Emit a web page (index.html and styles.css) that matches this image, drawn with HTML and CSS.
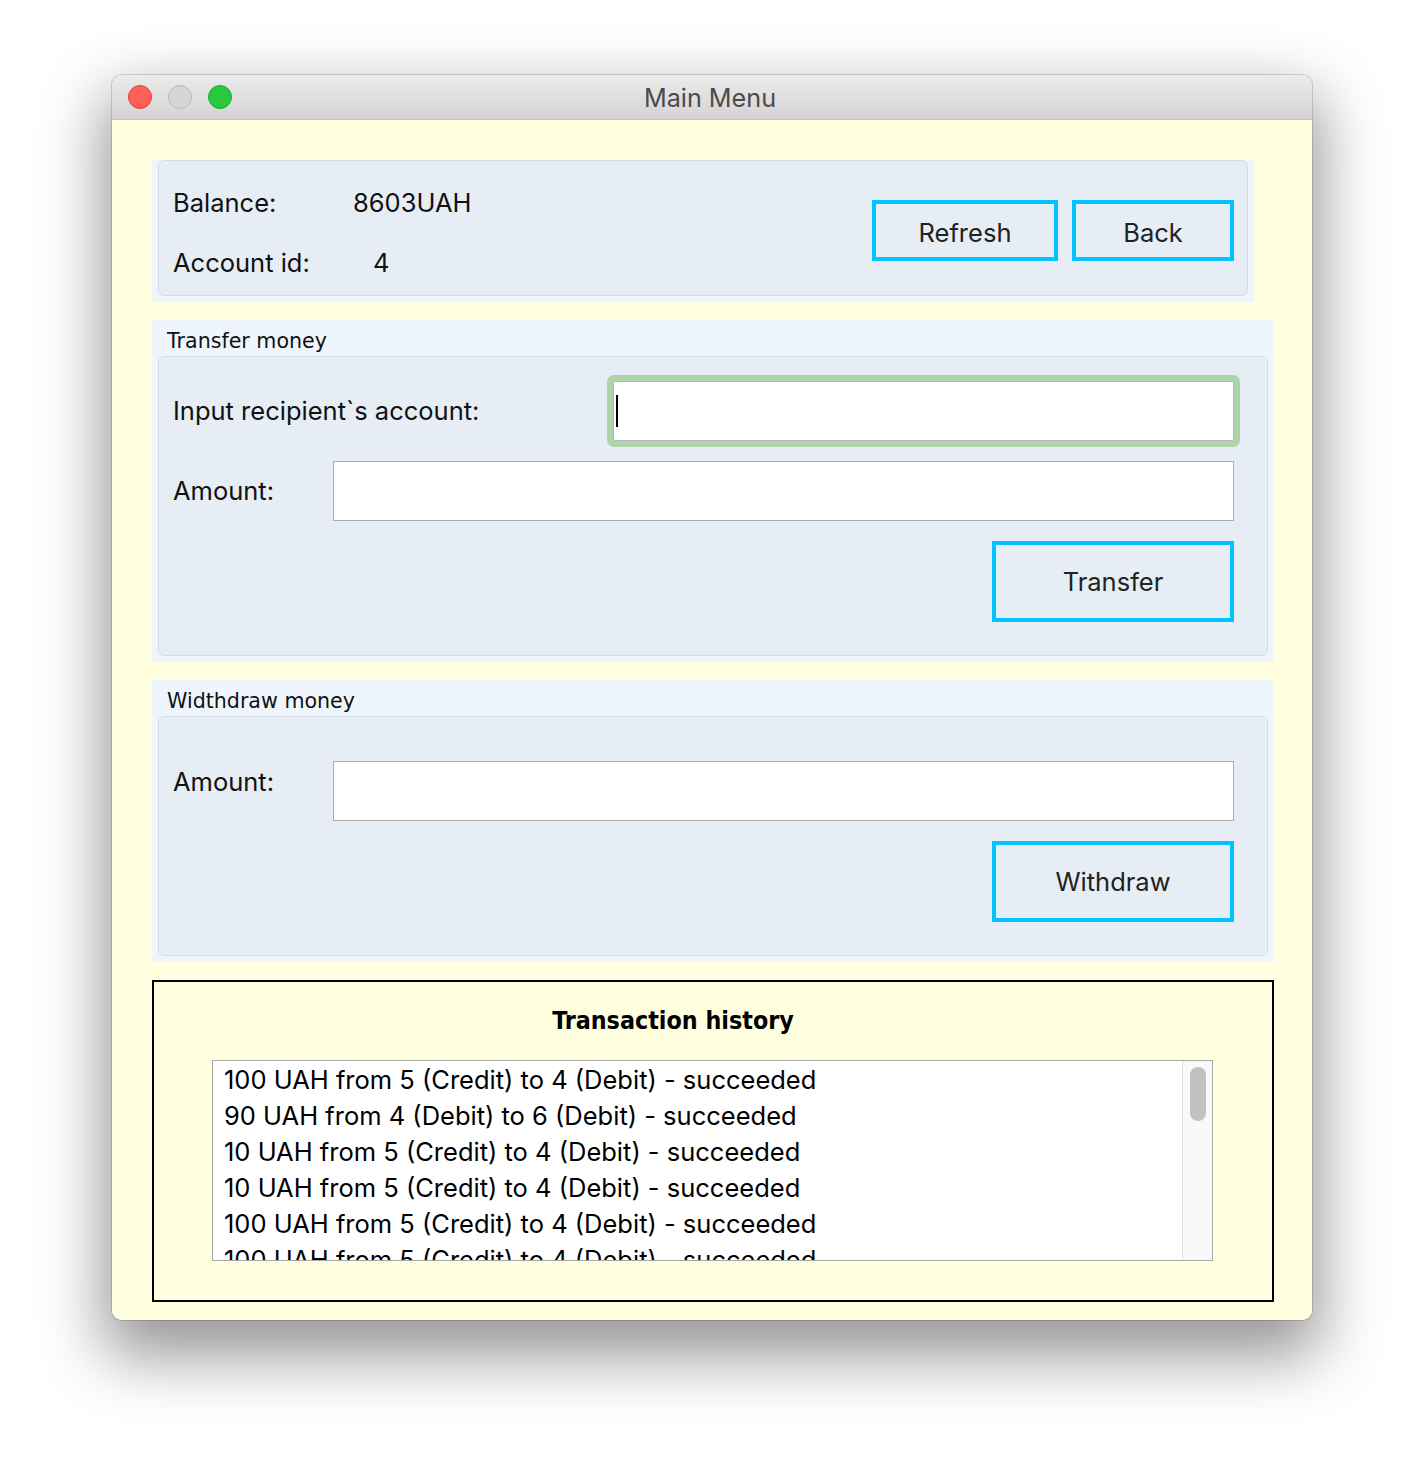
FILE: index.html
```html
<!DOCTYPE html>
<html lang="en">
<head>
<meta charset="utf-8">
<title>Main Menu</title>
<link rel="stylesheet" href="styles.css">
</head>
<body>
<div class="window">
  <div class="titlebar">
    <div class="lights">
      <span class="light light-close"></span>
      <span class="light light-min"></span>
      <span class="light light-max"></span>
    </div>
    <div class="title">Main Menu</div>
    <div class="spacer"></div>
  </div>
  <div class="content">
    <div class="summary-wrap">
      <div class="panel summary">
        <div class="info">
          <div class="info-row"><span class="lbl lbl-balance">Balance:</span><span class="val">8603UAH</span></div>
          <div class="info-row"><span class="lbl lbl-account">Account id:</span><span class="val">4</span></div>
        </div>
        <div class="actions">
          <button class="btn btn-top btn-refresh" type="button">Refresh</button>
          <button class="btn btn-top btn-back" type="button">Back</button>
        </div>
      </div>
    </div>

    <section class="group group-transfer">
      <div class="group-title">Transfer money</div>
      <div class="panel group-body body-transfer">
        <div class="field-row">
          <span class="lbl">Input recipient`s account:</span>
          <div class="field field-recipient field-focus"><span class="caret"></span></div>
        </div>
        <div class="field-row">
          <span class="lbl">Amount:</span>
          <div class="field field-amount"></div>
        </div>
        <div class="btn-row">
          <button class="btn btn-big" type="button">Transfer</button>
        </div>
      </div>
    </section>

    <section class="group group-withdraw">
      <div class="group-title">Widthdraw money</div>
      <div class="panel group-body body-withdraw">
        <div class="field-row field-row-top">
          <span class="lbl lbl-top">Amount:</span>
          <div class="field field-amount"></div>
        </div>
        <div class="btn-row">
          <button class="btn btn-big" type="button">Withdraw</button>
        </div>
      </div>
    </section>

    <section class="history">
      <div class="history-title">Transaction history</div>
      <div class="list">
        <div class="list-items">
          <div class="item">100 UAH from 5 (Credit) to 4 (Debit) - succeeded</div>
          <div class="item">90 UAH from 4 (Debit) to 6 (Debit) - succeeded</div>
          <div class="item">10 UAH from 5 (Credit) to 4 (Debit) - succeeded</div>
          <div class="item">10 UAH from 5 (Credit) to 4 (Debit) - succeeded</div>
          <div class="item">100 UAH from 5 (Credit) to 4 (Debit) - succeeded</div>
          <div class="item">100 UAH from 5 (Credit) to 4 (Debit) - succeeded</div>
        </div>
        <div class="scrollbar"><div class="thumb"></div></div>
      </div>
    </section>
  </div>
</div>
</body>
</html>
```
FILE: styles.css
```css
html, body {
  margin: 0;
  padding: 0;
  background: #ffffff;
}

body {
  height: 1468px;
  box-sizing: border-box;
  padding: 75px 0 0 112px;
  overflow: hidden;
  font-family: Inter, "Noto Sans", "Liberation Sans", sans-serif;
  color: #111111;
}

.window {
  width: 1200px;
  height: 1245px;
  border-radius: 10px;
  overflow: hidden;
  box-shadow: 0 0 0 1px rgba(0, 0, 0, 0.14), 0 28px 64px 8px rgba(0, 0, 0, 0.42);
  display: flex;
  flex-direction: column;
}

/* ---------- title bar ---------- */
.titlebar {
  height: 44px;
  flex: 0 0 44px;
  border-bottom: 1px solid #c2c2c2;
  background: linear-gradient(#ebebeb, #d4d4d4);
  display: grid;
  grid-template-columns: 1fr auto 1fr;
  align-items: center;
}

.lights {
  display: flex;
  gap: 16px;
  padding-left: 16px;
}

.light {
  width: 24px;
  height: 24px;
  border-radius: 50%;
  box-sizing: border-box;
}

.light-close {
  background: #fe5f57;
  border: 1px solid #e2463f;
}

.light-min {
  background: #d6d6d6;
  border: 1px solid #b9b9b9;
}

.light-max {
  background: #28c840;
  border: 1px solid #1cad2c;
}

.title {
  font-size: 25.2px;
  color: #4b4b4b;
  padding-top: 2px;
  transform: translateX(-2px);
}

/* ---------- content ---------- */
.content {
  flex: 1;
  background: #ffffe0;
  padding: 40px 38px 18px 40px;
  display: flex;
  flex-direction: column;
  gap: 18px;
}

.panel {
  background: #e6edf5;
  border: 1px solid #d5dce5;
  border-radius: 6px;
  box-sizing: border-box;
}

.summary-wrap {
  width: 1102px;
  height: 142px;
  box-sizing: border-box;
  padding: 0 6px 6px 6px;
  background: #eef5fd;
}

.summary {
  height: 136px;
  display: flex;
  justify-content: space-between;
}

.info {
  padding: 27px 0 0 14px;
  display: flex;
  flex-direction: column;
  gap: 30px;
}

.info-row {
  display: flex;
  font-size: 25.5px;
  line-height: 30px;
  height: 30px;
}

.lbl {
  font-size: 25.5px;
  line-height: 30px;
  color: #111111;
  white-space: nowrap;
}

.lbl-balance { width: 180px; }
.lbl-account { width: 200px; }

.val { color: #111111; }

.actions {
  padding: 39px 13px 0 0;
  display: flex;
  gap: 14px;
  align-items: flex-start;
}

.btn {
  font-family: Inter, "Noto Sans", "Liberation Sans", sans-serif;
  font-size: 25.5px;
  color: #222222;
  background: transparent;
  border: 4px solid #00c3ff;
  box-sizing: border-box;
  height: 61px;
  padding: 0;
  margin: 0;
}

.btn-top { padding-top: 3px; }
.btn-refresh { width: 186px; }
.btn-back { width: 162px; }

/* ---------- groups ---------- */
.group {
  width: 1122px;
  box-sizing: border-box;
  padding: 0 6px 6px 6px;
  background: #eef5fd;
  display: flex;
  flex-direction: column;
}

.group-transfer { height: 342px; }
.group-withdraw { height: 282px; }

.group-title {
  height: 36px;
  box-sizing: border-box;
  padding: 6px 0 0 9px;
  font-family: "DejaVu Sans", "Noto Sans", sans-serif;
  font-size: 20.6px;
  line-height: 30px;
  color: #111111;
}

.group-body {
  display: flex;
  flex-direction: column;
  gap: 20px;
  padding: 0 33px 0 14px;
}

.body-transfer {
  height: 300px;
  padding-top: 24px;
}

.body-withdraw {
  height: 240px;
  padding-top: 44px;
}

.field-row {
  display: flex;
  justify-content: space-between;
  align-items: center;
  height: 60px;
}

.field-row-top {
  align-items: flex-start;
}

.lbl-top {
  margin-top: 6px;
}

.field {
  height: 60px;
  box-sizing: border-box;
  background: #ffffff;
  border: 1px solid #adadad;
  display: flex;
  align-items: center;
}

.field-recipient { width: 621px; }
.field-amount { width: 901px; }

.field-focus {
  border-color: #b6b6b6;
  border-radius: 1px;
  outline: 6px solid #acd5a8;
  outline-offset: 0;
}

.caret {
  width: 2px;
  height: 32px;
  margin-left: 2px;
  background: #000000;
}

.btn-row {
  display: flex;
  justify-content: flex-end;
}

.btn-big {
  width: 242px;
  height: 81px;
}

/* ---------- history ---------- */
.history {
  width: 1122px;
  height: 322px;
  box-sizing: border-box;
  border: 2px solid #000000;
  display: flex;
  flex-direction: column;
  align-items: flex-start;
}

.history-title {
  align-self: stretch;
  padding: 25px 80px 0 0;
  text-align: center;
  font-family: "DejaVu Sans Condensed", "DejaVu Sans", sans-serif;
  font-stretch: condensed;
  font-weight: bold;
  font-size: 24.8px;
  line-height: 28px;
  color: #000000;
}

.list {
  margin: 25px 0 0 58px;
  width: 1001px;
  height: 201px;
  box-sizing: border-box;
  border: 1px solid #a9a9a9;
  background: #ffffff;
  display: flex;
  overflow: hidden;
}

.list-items {
  flex: 1;
  padding: 1px 0 0 11px;
  overflow: hidden;
}

.item {
  font-size: 25.5px;
  line-height: 36px;
  height: 36px;
  color: #000000;
  white-space: nowrap;
}

.scrollbar {
  width: 29px;
  flex: 0 0 29px;
  border-left: 1px solid #e4e4e4;
  background: #f9f9f9;
  box-sizing: content-box;
}

.thumb {
  width: 16px;
  height: 54px;
  margin: 6px 0 0 7px;
  border-radius: 8px;
  background: #c1c1c1;
}
```
